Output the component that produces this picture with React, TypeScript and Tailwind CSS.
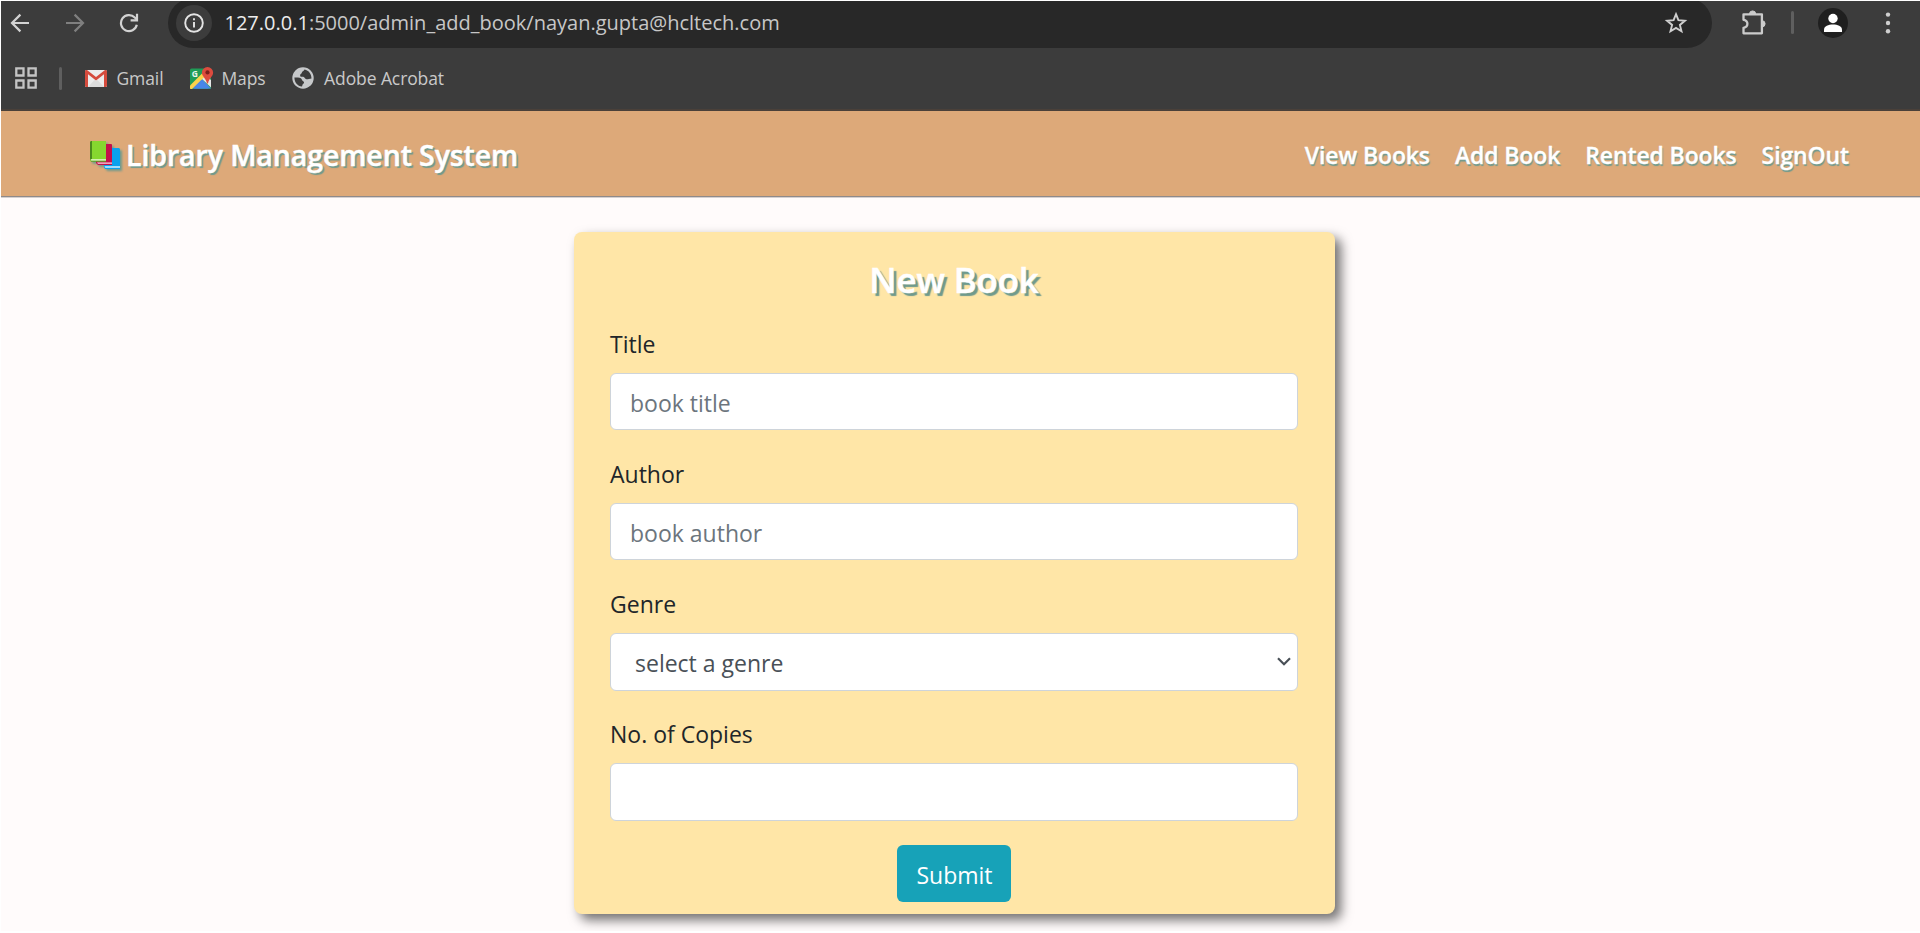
import type { ReactNode } from "react";

function ArrowIcon({ forward = false }: { forward?: boolean }) {
  return (
    <svg
      width="20"
      height="20"
      viewBox="0 0 20 20"
      fill="none"
      strokeWidth="2.2"
      className={forward ? "rotate-180 stroke-[#7f7f7f]" : "stroke-[#d2d2d2]"}
    >
      <path d="M19 10H2.6M10.4 1.6 2 10l8.400 8.400" />
    </svg>
  );
}

function ReloadIcon() {
  return (
    <svg width="20" height="20" viewBox="0 0 20 20" fill="none" stroke="#d2d2d2" strokeWidth="2.2">
      <path d="M17.800 11.800A8 8 0 1 1 15.800 4.600L18 6.800" />
      <path d="M18 .8v6.600h-6.400" />
    </svg>
  );
}

function InfoIcon() {
  return (
    <svg width="20" height="20" viewBox="0 0 20 20" fill="none" stroke="#e4e4e4">
      <circle cx="10" cy="10" r="8.800" strokeWidth="1.900" />
      <path d="M10 9v5.600M10 5.200v2" strokeWidth="1.900" />
    </svg>
  );
}

function StarIcon() {
  return (
    <svg width="24" height="24" viewBox="0 0 24 24" fill="none" stroke="#cfcfcf" strokeWidth="1.900">
      <path d="m12 3.200 2.400 6 6.500.5-5 4.200 1.600 6.400L12 16.900l-5.500 3.400 1.600-6.400-5-4.200 6.500-.5z" />
    </svg>
  );
}

function PuzzleIcon() {
  return (
    <svg width="26" height="26" viewBox="0 0 26 26">
      <path
        d="M2.500 4.300h18.400v19H2.500v-5.500c2.600-.4 3.900-2 3.900-4s-1.300-3.600-3.900-4z"
        fill="none"
        stroke="#cbcbcb"
        strokeWidth="2.300"
        strokeLinejoin="round"
      />
      <path d="M8.500 4a3.100 3.100 0 0 1 6.200 0zM21 10.700a3.100 3.100 0 0 1 0 6.200z" fill="#cbcbcb" stroke="#cbcbcb" />
    </svg>
  );
}

function AvatarIcon() {
  return (
    <svg width="30" height="30" viewBox="0 0 30 30">
      <circle cx="15" cy="15" r="15" fill="#1f1f1f" />
      <circle cx="15" cy="10.500" r="4.700" fill="#fff" />
      <path d="M6 24v-2.300c0-3.600 4.500-5.200 9-5.200s9 1.600 9 5.200V24z" fill="#fff" />
    </svg>
  );
}

function DotsIcon() {
  return (
    <svg width="6" height="22" viewBox="0 0 6 22" fill="#cfcfcf">
      <circle cx="3" cy="2.600" r="2.200" />
      <circle cx="3" cy="11" r="2.200" />
      <circle cx="3" cy="19.200" r="2.200" />
    </svg>
  );
}

function AppsIcon() {
  return (
    <svg width="22" height="22" viewBox="0 0 22 22" fill="none" stroke="#c4c4c4" strokeWidth="2.300">
      <path d="M1.300 1.300h7.200v7.200H1.300zM13.500 1.300h7.200v7.200h-7.200zM1.300 13.500h7.200v7.200H1.300zM13.500 13.500h7.200v7.200h-7.200z" />
    </svg>
  );
}

function GmailIcon() {
  return (
    <svg width="22" height="18" viewBox="0 0 22 18" className="mt-[2px]">
      <rect width="22" height="17" rx="1.500" fill="#ececec" />
      <path d="m3 17 6.500-7 1.500 1.200 1.500-1.200 6.500 7z" fill="#dcdcdc" />
      <path d="M0 1.500C0 .6.700 0 1.500 0H2l9 7 9-7h.5c.8 0 1.500.6 1.500 1.500v14c0 .9-.6 1.500-1.500 1.500H19V4.200l-8 6.200-8-6.200V17H1.500C.6 17 0 16.400 0 15.500z" fill="#d54b3d" />
    </svg>
  );
}

function MapsIcon() {
  return (
    <svg width="24" height="22" viewBox="0 0 24 22">
      <rect y="1.500" width="21" height="20.500" rx="1.500" fill="#1f9d57" />
      <path d="M1 21.500 11 11l10 10.500z" fill="#4a86e8" />
      <path d="M11.500 11.500 15 8l6 5v7.500z" fill="#e6e6e6" />
      <path d="M0 18.500 15.500 3l2 4L2 22H.8C.3 22 0 21.500 0 21z" fill="#fbd34b" />
      <path d="M4 21.500 11 13.500l7.500 8z" fill="#4a86e8" />
      <text x="1.800" y="10" fontSize="8.500" fontWeight="700" fill="#e9f5ee" fontFamily="Open Sans, sans-serif">
        G
      </text>
      <path d="M17.500 0a5.600 5.600 0 0 1 5.600 5.600c0 4.200-4 5.400-5.100 11h-1c-1.100-5.600-5.100-6.800-5.100-11A5.600 5.600 0 0 1 17.500 0z" fill="#dd4b3e" />
      <circle cx="17.500" cy="5.400" r="2.100" fill="#7d1f1b" />
    </svg>
  );
}

function GlobeIcon() {
  return (
    <svg width="22" height="22" viewBox="0 0 22 22">
      <circle cx="11" cy="11" r="10.700" fill="#c6c8ca" />
      <path
        d="M12.500 2.500c-.6 1.800-2.500 1.500-2.700 3.200-.2 1.500-1.800 1.200-1.700 2.700.1 1.300 1.500 1.500 2.800 1.400 1.600-.1 1.700 1.600 3 2.300 1.200.6 3-.2 5.600-.6C19.400 7 17 3.500 12.500 2.500z"
        fill="#3c3c3c"
      />
      <path
        d="M2.400 10.500c2.200.1 5-.2 6.400.8 1.300 1 .9 2.300 2.300 2.900 1.300.5 1.200 1.900.2 2.600-1 .6-.8 1.800-1.300 2.800C5.500 19 2.500 15.500 2.400 10.500z"
        fill="#3c3c3c"
      />
    </svg>
  );
}

function BooksIcon() {
  return (
    <svg width="31" height="29" viewBox="0 0 31 29" className="drop-shadow-[2px_2px_1px_#6f9a8d]">
      <path d="M14 7h15l1 1v20H15l-1-2z" fill="#0aa1ee" />
      <path d="M14.500 25.200H30v1.500H15.300z" fill="#d9f1ff" />
      <path d="M6 3h15.500l.5 1v20H8l-2-2z" fill="#c50f4a" />
      <path d="M7 21.400h15v1.400H8z" fill="#f6d7e1" />
      <path d="M0 1l1-1h15v20.500H1l-1-1z" fill="#86d72f" />
      <path d="M0 1l1-1h1v18.500H0z" fill="#4b8a1d" />
      <path d="M.8 18.300H16v1.500H1.200z" fill="#eefbdc" />
      <path d="M.6 19.800H16v.8H1z" fill="#4b8a1d" />
    </svg>
  );
}

function Bookmark({ icon, label, className }: { icon: ReactNode; label: string; className: string }) {
  return (
    <div className={`flex items-center text-[17.5px] leading-6 tracking-[-0.1px] text-[#c9c9c9] ${className}`}>
      {icon}
      <span>{label}</span>
    </div>
  );
}

function BrowserChrome() {
  return (
    <header className="flex h-[110px] shrink-0 flex-col overflow-hidden border-b-2 border-[#4a4039] bg-[#3c3c3c]">
      <div className="flex h-[47px] items-center pb-[4px] pl-[9px]">
        <ArrowIcon />
        <div className="ml-[35px]">
          <ArrowIcon forward />
        </div>
        <div className="ml-[34px]">
          <ReloadIcon />
        </div>
        <div className="mt-[1px] ml-[29px] flex h-[50px] w-[1544px] items-center rounded-full bg-[#282828] pr-[24px] pl-[8px]">
          <span className="flex size-[36px] items-center justify-center rounded-full bg-[#3c3c3c]">
            <InfoIcon />
          </span>
          <span className="ml-[12.500px] text-[20px] leading-7 text-[#c7c7c7]">
            <span className="text-[#ececec]">127.0.0.1</span>:5000/admin_add_book/nayan.gupta@hcltech.com
          </span>
          <span className="ml-auto">
            <StarIcon />
          </span>
        </div>
        <div className="ml-[29px]">
          <PuzzleIcon />
        </div>
        <div className="ml-[24px] h-[23px] w-[3px] rounded-full bg-[#5f5f5f]" />
        <div className="ml-[24px]">
          <AvatarIcon />
        </div>
        <div className="ml-[37px]">
          <DotsIcon />
        </div>
      </div>
      <div className="flex h-[61px] items-center pb-[1px] pl-[14px]">
        <AppsIcon />
        <div className="ml-[22px] h-[23px] w-[3px] rounded-full bg-[#5f5f5f]" />
        <Bookmark icon={<GmailIcon />} label="Gmail" className="ml-[23px] gap-[9.500px]" />
        <Bookmark icon={<MapsIcon />} label="Maps" className="ml-[26.500px] gap-[7.500px]" />
        <Bookmark icon={<GlobeIcon />} label="Adobe Acrobat" className="ml-[26.500px] gap-[10px]" />
      </div>
    </header>
  );
}

function Navbar() {
  return (
    <nav className="flex h-[86px] shrink-0 items-center justify-between border-b border-[#8f8a8a] bg-[#dda979] pt-[2px] pr-[71px] pl-[89px] font-semibold text-white shadow-[0_1px_0_#d5d0d0]">
      <a className="flex items-center gap-[5px]">
        <span className="pt-[2px]">
          <BooksIcon />
        </span>
        <span className="text-[28.5px] leading-[40px] tracking-[-0.1px] [-webkit-text-stroke:0.4px_#fff] [text-shadow:2px_2px_1px_#6f9a8d]">
          Library Management System
        </span>
      </a>
      <div className="flex gap-[25px] text-[23px] leading-[40px] tracking-[-0.12px] [-webkit-text-stroke:0.3px_#fff] [text-shadow:1px_2px_1px_#6f9a8d]">
        <a>View Books</a>
        <a>Add Book</a>
        <a>Rented Books</a>
        <a>SignOut</a>
      </div>
    </nav>
  );
}

function Field({ label, children }: { label: string; children: ReactNode }) {
  return (
    <div className="flex h-[130px] flex-col gap-[12px]">
      <label className="h-[36px] pt-px leading-[36px] text-[#212529]">{label}</label>
      {children}
    </div>
  );
}

const box = "w-full rounded-[6px] border border-[#ced4da] bg-white";

function BookForm() {
  return (
    <form className="mt-[35px] ml-[573px] flex h-[682px] w-[761px] shrink-0 flex-col rounded-[8px] bg-[#ffe6a7] pt-[26px] pr-[37px] pl-[36px] text-[23px] shadow-[6px_6px_12px_rgba(0,0,0,0.56)]">
      <h2 className="mb-[23px] text-center text-[35px] leading-[44px] font-semibold tracking-[-0.2px] text-white [-webkit-text-stroke:0.4px_#fff] [text-shadow:3px_3px_1px_#6f9a8d]">
        New Book
      </h2>
      <Field label="Title">
        <input className={`${box} h-[57px] px-[19px] pt-[3px] placeholder:text-[#6c757d]`} placeholder="book title" />
      </Field>
      <Field label="Author">
        <input className={`${box} h-[57px] px-[19px] pt-[3px] placeholder:text-[#6c757d]`} placeholder="book author" />
      </Field>
      <Field label="Genre">
        <div className={`${box} flex h-[58px] items-center justify-between pr-[6px] pl-[24px] text-[#495057]`}>
          <span className="pt-[2px]">select a genre</span>
          <svg width="14" height="9" viewBox="0 0 14 9" fill="none" stroke="#495057" strokeWidth="2.200" className="mb-[2px]">
            <path d="m1 1.200 6 6 6-6" />
          </svg>
        </div>
      </Field>
      <Field label="No. of Copies">
        <input className={`${box} h-[58px] px-[19px]`} />
      </Field>
      <button
        type="button"
        className="h-[57px] w-[114px] shrink-0 self-center rounded-[6px] bg-[#17a2b8] pt-[3px] pl-px text-white"
      >
        Submit
      </button>
    </form>
  );
}

export default function App() {
  return (
    <div className="h-[933px] w-[1920px] overflow-hidden bg-white pt-px pb-[2px] pl-px font-['Open_Sans',sans-serif]">
      <div className="flex h-full flex-col overflow-hidden bg-[#fffbfb]">
        <BrowserChrome />
        <Navbar />
        <BookForm />
      </div>
    </div>
  );
}
